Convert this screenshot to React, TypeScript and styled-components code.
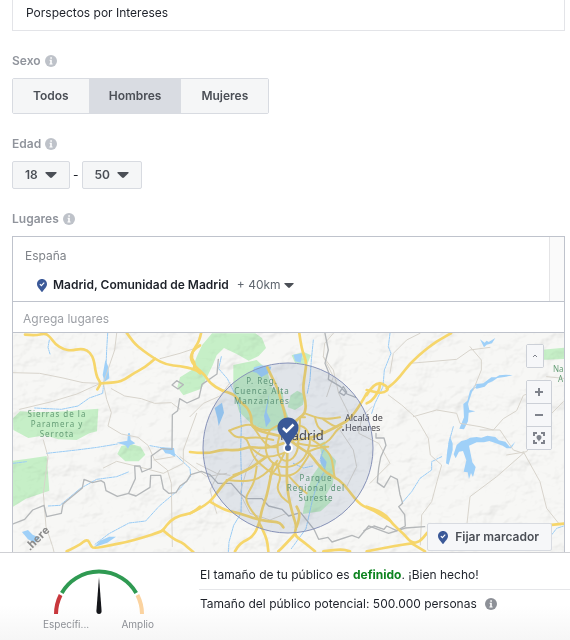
import React from "react";
import styled, { createGlobalStyle } from "styled-components";

const GlobalStyle = createGlobalStyle`
  *, *::before, *::after { box-sizing: border-box; }
  body {
    margin: 0;
    background: #fff;
    color: #1d2129;
    font: 12px/16px Inter, "Liberation Sans", sans-serif;
  }
  button, input, select { font: inherit; color: inherit; }
`;

const Page = styled.div`
  display: flex;
  flex-direction: column;
  height: 100vh;
  min-height: 560px;
`;

const Form = styled.form`
  display: flex;
  flex: 1;
  flex-direction: column;
  min-height: 0;
  padding: 0 5px 0 12px;
`;

const NameInput = styled.input`
  width: 100%;
  height: 31px;
  flex: none;
  padding: 0 13px 6px;
  border: 1px solid #e3e4e8;
  border-top: 0;
  border-radius: 0;
  background: #fff;
  outline: none;
`;

const Field = styled.fieldset<{ $top: number }>`
  display: flex;
  flex: none;
  flex-direction: column;
  align-items: flex-start;
  min-width: 0;
  margin: ${(p) => p.$top}px 0 0;
  padding: 0;
  border: 0;
`;

const FieldLabel = styled.legend`
  display: flex;
  align-items: center;
  gap: 4px;
  height: 16px;
  margin-bottom: 9px;
  padding: 0;
  color: #90949c;
  font-weight: 600;
`;

const Segments = styled.div`
  display: flex;
  height: 36px;
  border: 1px solid #d8dbe1;
  border-radius: 2px;
`;

const Segment = styled.label`
  display: flex;
  align-items: center;
  padding: 0 20px;
  background: #f5f6f7;
  color: #4b4f56;
  font-weight: 600;
  cursor: pointer;
  &:has(input:checked) { background: #d9dce2; }
`;

const SegmentRadio = styled.input`
  width: 0;
  height: 0;
  margin: 0;
  appearance: none;
`;

const AgeRow = styled.div`
  display: flex;
  align-items: center;
  gap: 3px;
`;

const SelectBox = styled.span`
  display: grid;
  grid-template-columns: 1fr auto;
  align-items: center;
`;

const Select = styled.select`
  grid-area: 1 / 1 / 2 / 3;
  appearance: none;
  outline: none;
  cursor: pointer;
`;

const AgeSelect = styled(Select)<{ $width: number }>`
  width: ${(p) => p.$width}px;
  height: 28px;
  padding: 0 12px;
  border: 1px solid #d8dbe1;
  border-radius: 2px;
  background: #f5f6f7;
  color: #4b4f56;
  font-weight: 600;
`;

const RadiusSelect = styled(Select)`
  width: 57px;
  padding: 0;
  border: 0;
  background: transparent;
  color: #606770;
`;

const CaretSlot = styled.span<{ $inset: number }>`
  display: flex;
  grid-area: 1 / 2 / 2 / 3;
  margin-right: ${(p) => p.$inset}px;
  color: #4b4f56;
  pointer-events: none;
`;

const Places = styled.section`
  display: flex;
  flex: 1;
  flex-direction: column;
  min-height: 0;
  border: 1px solid #bfc3cc;
  border-bottom: 0;
`;

const PlaceList = styled.div`
  display: flex;
  flex: none;
  justify-content: space-between;
  height: 64px;
`;

const PlaceBody = styled.div`
  display: flex;
  flex-direction: column;
  padding: 11px 12px 0;
  gap: 13px;
`;

const Country = styled.span`
  color: #7f8389;
`;

const PlaceRow = styled.div`
  display: flex;
  align-items: center;
  padding-left: 12px;
  gap: 6px;
`;

const PlaceName = styled.span`
  margin-right: 2px;
  font-weight: 600;
`;

const ScrollTrack = styled.div`
  width: 15px;
  border-left: 1px solid #e4e4e6;
  background: #fafafa;
`;

const PlaceInput = styled.input`
  flex: none;
  width: 100%;
  height: 32px;
  padding: 3px 10px 0;
  border: 0;
  border-top: 1px solid #bfc3cc;
  border-bottom: 1px solid #bfc3cc;
  background: #fff;
  outline: none;
  &::placeholder { color: #9da0a6; opacity: 1; }
`;

const MapFrame = styled.div`
  position: relative;
  flex: 1;
  min-height: 0;
  overflow: hidden;
  background: #f4f4f2;
  > svg { display: block; width: 100%; height: 100%; }
`;

const MapControls = styled.div`
  position: absolute;
  top: 11px;
  right: 12px;
  display: flex;
  flex-direction: column;
  align-items: flex-start;
  gap: 12px;
`;

const ControlGroup = styled.div`
  display: flex;
  flex-direction: column;
  border: 1px solid #ccd0d7;
  border-radius: 2px;
  background: #ccd0d7;
  gap: 1px;
`;

const ControlButton = styled.button<{ $narrow?: boolean }>`
  display: flex;
  align-items: center;
  justify-content: center;
  width: ${(p) => (p.$narrow ? 16 : 24)}px;
  height: 22px;
  padding: 0;
  border: 0;
  background: #f6f7f9;
  color: #7f838c;
  cursor: pointer;
`;

const MarkerButton = styled.button`
  position: absolute;
  right: 12px;
  bottom: 1px;
  display: flex;
  align-items: center;
  gap: 7px;
  height: 28px;
  padding: 0 12px 0 10px;
  border: 1px solid #d8dbe1;
  border-radius: 2px;
  background: #f6f7f9;
  color: #4b4f56;
  font-weight: 600;
  cursor: pointer;
`;

const Summary = styled.footer`
  display: flex;
  flex: none;
  height: 88px;
  border-top: 1px solid #cfd0d4;
  background: linear-gradient(#fff 60%, #f6f6f6);
`;

const Gauge = styled.div`
  display: flex;
  flex: none;
  flex-direction: column;
  align-items: center;
  width: 199px;
  padding: 14px 2px 0 0;
`;

const GaugeDial = styled.svg`
  width: 92px;
  height: 49px;
`;

const GaugeLabels = styled.div`
  display: flex;
  justify-content: space-between;
  width: 111px;
  color: #8d9096;
  font-size: 10px;
`;

const SummaryText = styled.div`
  flex: 1;
  padding-top: 13px;
`;

const SummaryLine = styled.p<{ $divided?: boolean }>`
  display: flex;
  align-items: center;
  gap: 8px;
  margin: 0;
  padding: ${(p) => (p.$divided ? "6px 0 0 1px" : "1px 0 6px 1px")};
  border-top: ${(p) => (p.$divided ? "1px solid #e5e6e9" : "0")};
  white-space: nowrap;
`;

const Good = styled.strong`
  color: #0e8420;
  font-weight: 700;
`;

function InfoIcon({ color = "#bec2c9" }: { color?: string }) {
  return (
    <svg width="12" height="12" viewBox="0 0 12 12" aria-hidden="true">
      <circle cx="6" cy="6" r="6" fill={color} />
      <path d="M5.3 2.2h1.6v1.5H5.3zM4.6 4.7h2.2v3.8h.8v1H4.4v-1h.8V5.7h-.6z" fill="#fff" />
    </svg>
  );
}

function Caret({ size = 12 }: { size?: number }) {
  return (
    <svg width={size} height={size / 2} viewBox="0 0 12 6" aria-hidden="true">
      <path d="M1 0h10q1 0 .6.9L7 5.5q-1 .8-2 0L.4.9Q0 0 1 0z" fill="currentColor" />
    </svg>
  );
}

function PinIcon() {
  return (
    <svg width="10" height="13" viewBox="0 0 21 27" aria-hidden="true">
      <path d="M10.5 0C4.5 0 0 4.600 0 10.400c0 6.600 6.800 11.400 9 15.800.7 1.200 2.300 1.200 3 0 2.200-4.400 9-9.200 9-15.800C21 4.600 16.500 0 10.500 0z" fill="#3b5998" />
      <path d="M6 10.500l3.200 3.300 6-6.300" fill="none" stroke="#fff" strokeWidth="2.400" />
    </svg>
  );
}

/* Turns a list of points into one path whose corners are rounded through the segment midpoints. */
function smooth(line: string) {
  const pts = line.split(" ").map((p) => p.split(",").map(Number));
  let d = `M${pts[0][0]} ${pts[0][1]}`;
  for (let i = 1; i < pts.length - 1; i++) {
    const [x, y] = pts[i];
    const [nx, ny] = pts[i + 1];
    d += `Q${x} ${y} ${(x + nx) / 2} ${(y + ny) / 2}`;
  }
  const last = pts[pts.length - 1];
  return `${d}L${last[0]} ${last[1]}`;
}

const WEST_MOTORWAYS = [
  "75,14 105,17 135,10 150,20 165,42 190,58 215,62 240,56 262,60 277,78 283,98 286,120 292,145 303,160 292,178",
  "303,160 350,158 375,148 400,130 435,112 465,86",
  "380,8 400,38 430,62 462,85 500,105 540,108 585,118 600,130",
  "582,115 586,100 574,85 578,62 600,46",
  "200,664 235,648 262,626 272,646 280,656 330,646 380,636 430,622 480,606 490,600 510,572 540,556 575,550 600,530",
  "488,600 520,628 545,636 560,650 580,666",
];

const CITY_MOTORWAYS = [
  "328,10 335,60 350,95 345,130 338,180 348,220 345,250 330,262 305,285",
  "35,0 30,30 10,60 0,85 15,110 45,135 60,160 95,182 130,192 150,215 172,232 185,260 183,285 200,300 235,310 270,318",
  "232,112 250,150 265,180 275,220 285,250 290,290",
  "530,190 490,262 440,290 400,310 360,325 310,330",
  "0,366 50,372 95,358 140,362 180,350 215,355 250,350 280,340",
  "300,330 330,355 360,370 380,400 410,430 450,450 475,480 510,525 550,540 600,572",
  "292,365 290,430 292,480 300,520 310,560 320,590 312,615 340,635 375,664",
  "250,400 240,450 230,500 215,540 208,580 190,620 150,640 135,664",
  "230,380 190,410 150,430 110,450 80,490 60,515 30,535 0,550",
  "60,515 100,540 150,550 208,570 250,575 270,578 280,592",
  "312,615 280,650 265,664",
  "208,580 230,620 235,664",
  "320,590 332,555 320,530",
  "400,664 450,656 480,664",
];

const CITY_STREETS = [
  "275,300 310,296 328,330 320,372 298,395 268,388 260,345 275,300",
  "240,300 270,280 305,285 345,288 362,325 355,365 330,400 285,415 245,400 225,365 230,320 240,300",
  "118,302 150,288 185,282 210,300 240,300",
  "118,302 135,325 165,318 180,350 192,385 220,410 245,430 285,440 320,430 345,395 360,370",
  "345,250 375,262 410,268 450,262",
  "360,325 400,350 425,380 430,420 435,445",
  "190,290 215,330 240,352 262,352",
  "165,325 200,320 250,330",
  "200,410 195,450 180,480 165,505 182,540 208,570",
  "110,450 150,455 200,450 240,420 262,392",
  "260,400 275,440 260,470 272,500 300,520",
  "375,262 380,290 405,308",
  "305,285 325,262 345,262",
  "322,340 370,350 395,345 420,330 440,300 455,290",
  "180,350 210,380 250,380 290,366",
  "130,435 160,425 190,408",
  "355,365 385,352 415,350",
  "298,440 325,470 350,490",
  "292,350 270,400 240,440",
  "330,262 330,300 318,330",
  "400,268 425,285 440,290",
];

const EAST_MOTORWAYS = [
  "243,10 215,25 185,45 160,65 120,100 90,140 65,165 50,175",
  "-10,195 15,152 60,172 40,192 -10,180",
  "-10,220 5,215 28,180 30,160",
  "-10,530 40,545 70,585 100,610 125,640 150,635 172,608",
  "125,640 165,664",
  "-10,664 60,650 125,640",
  "530,586 582,581",
];

function Roads({ lines, width }: { lines: string[]; width: number }) {
  return (
    <g fill="none" stroke="#f6d66b" strokeWidth={width}>
      {lines.map((line) => <path key={line} d={smooth(line)} />)}
    </g>
  );
}

function MapDrawing() {
  return (
    <svg viewBox="13 333 551 219" preserveAspectRatio="xMidYMid slice" role="img" aria-label="Mapa de Madrid">
      <defs>
        <filter id="relief" x="0" y="0" width="100%" height="100%">
          <feTurbulence type="fractalNoise" baseFrequency="0.011 0.014" numOctaves="4" seed="8" />
          <feDiffuseLighting surfaceScale="26" diffuseConstant="1.2" lightingColor="#fff">
            <feDistantLight azimuth="225" elevation="58" />
          </feDiffuseLighting>
        </filter>
      </defs>
      <rect x="0" y="320" width="580" height="240" fill="#f7f7f5" />

      <g transform="translate(0 330) scale(.33333)" strokeLinejoin="round" strokeLinecap="round">
        {/* Parks */}
        <g fill="#c6efc7">
          <path d="M39 265L60 244l35 2 45 0 60-2 45-4 50-4-4 68-23 6-38 20-55-2-40-12-50 8-45-24z" />
          <path d="M39 392l45-6 56-8 8 104-40 14-30 10-39 24z" />
          <path d="M352 372l12-24 30-6 28 8 14 24-20 20-40 0z" />
          <path d="M540 142l35-22 15-40 16-34 30-36 130 0 20 14 12 30-22 24-30 14-36-20-38-18-22 22-12 30-34 70-54 20-18-24z" />
          <path d="M700 105l70-15 30 28 16 55 32 12 4 40 16 46-16 28-44 4-50-18-40-38-18-60z" />
          <path d="M875 76l36-10 22 10-12 28-36-6zM872 196l20-14 22 12-5 30-24 16-22-8zM958 342l16-8 6 26 28 32-10 70-24 38 20 14-32 30-54 8 12-62 18-54 30-42z" />
          <path d="M1578 76l40-16 90-8v34l-90 4-38 6z" />
        </g>
        <rect x="39" y="0" width="1660" height="680" filter="url(#relief)" opacity=".12" style={{ mixBlendMode: "multiply" }} />

        {/* Rivers */}
        <g fill="none" stroke="#9accf6" strokeWidth="3" strokeDasharray="9 3 4 3">
          <path d="M323 10l-3 50-2 50-6 42-4 38-40 14-34 24-50 10-80-4M148 30l-4 22 6 20M140 370l90-10 62-8 60-10M450 347l45 8 30 18 45 42 2 24-30 35-65 55-40 44-50 6-60 32-42 32M39 400l40-5M145 528l35-2 60-50 50-28 60-8 35-14" />
          <path d="M664 80l-8 36 26 30 22 44 16 40 4 60-2 70 3 110-2 80-22 36-14 50-2 30M940 30l-6 60-4 60-8 40M970 360l-10 30 16 30-26 46-14 50-18 80-44 60M1170 10l-5 40 8 20-20 50-4 50-24 50-10 30M880 400l30 14 28-6" />
          <path d="M1360 290l-14 50 2 40M1325 380l-30 15 0 25-35 25-25 40-30 35M1700 585l-30 10-20 26" />
        </g>
        {/* Lakes */}
        <g fill="#9fd0f8">
          <path d="M316 90l9 20 3 35-14 10-6-20zM350 338l32-6 2-22 6 0 2 20 14 10-16 6-6 10-8-10zM484 352l38 2 4 28-16-10-14-2zM66 606l18-6 14 14 22 10-16 14-20-10zM300 632l28-12 20 0-26 18-40 14z" />
          <path d="M762 112l22-6 30 4-6 18-24 14-14-14-12-2zM808 190l-8 56 12 26-14 20-6-34zM666 218l6 30-16 40-4-24-8-30zM880 74l28-4-6 28-16-4zM962 372l18 24-4 20-14-18z" />
          <path d="M1422 170l-12 12-8 30-12 10 2 40-14 34 14 2 12-24 2-26 20-4-18-4-4-18 12-36 14-20zM1420 170l10-8 20-2 10-8 14-10 14 0 10-6 20-2 20 2-20 4-26 4-14 10-14 6-10 10-24 6zM1370 345l14-12 16-4 10-6 20-2 14 2 18-6 24 4 10 10 20 4 14 16 16-16-12 20-14 0-12-8-16-6-24-8-16 4-22 0-23 10 4 20 6 30 10 14-8 30-6-12-6 18-4-20-12-2 8-34-10-28-12 2-10 20-6-12zM1350 320l-8 40-4 40 8 4 12-44 0-20zM1440 28l14 10 6-6 6 4 20-12-10 16-16 4-8 8z" />
        </g>

        {/* Minor roads */}
        <g fill="none" stroke="#d8d4cc" strokeWidth="3">
          <path d="M39 128l80 2 70 14 60 14 52 2-70 32-80 24-92 22M350 10l-6 50-34 100 10 48 14 40-10 40 40 24 50 10 30 24 20 44 38 30 12 40 3 190M334 176l40 22 50 8 40 14 50-2 26 20M600 50l-60 20-60 16M130 330l14 50-14 110 8 100 20 60 10 40M590 250l-40 110 0 40-60 30-60-16-80-20-40 20M462 390l60-10M540 380l80 60 60-10" />
          <path d="M570 260l40-40 50-22 30-40M590 400l60 30 40 6M1000 10l-26 30-4 40 30 40 16 70 30 60M1110 460l60-60-34-60-60-30 10-50 30-30M780 360l-40 60-20 70 30 60 60 20 50-20M660 420l-30 60 20 70M1020 300l40 60 10 50-30 60M970 80l30 60-20 60" />
          <path d="M1170 130l10-60 40-40 40-20M1165 195l40 30 45 40 35 60 6 50 34 30-14 50-16 60-30 40-4 90M1240 260l70-20 60 10 10 30 60 10 40 10 30-34 40-24 20-46 60-20M1230 100l140-12 40-28 60-8M1410 50l34 40 0 30-24 60M1570 365l50 90 20 80 40 50M1570 370l-80 70-80 60-10 90M1520 375l60-10 50-90 60-60M1640 140l60 6M1440 300l60 0 40 60 30 10" />
        </g>
        {/* Provincial borders */}
        <g fill="none" stroke="#b4b7b9" strokeWidth="4">
          <path d="M39 582l35-14 24-28 34-14 8 34 44-10 5-28 58-48 5-26 25 10 26-6 10 6 5 24 34 17 34-9 20-44-2-38 16 0 6 18 28-12 0-36 30-22 32 2 1-104 16-12 6-36 22 13 36-16 9-40 45-31 4-44M384 490l24 8 42-26 2-36 30 0 8 40 16 14 22-2 12-20 20-14 12-20 32-10 26 10 24 26 40 0 26 30 20 16 46 0 20 22 40 10 20 20 36-10 40 50 14 30 28-6 12 14 60-20 20 8 30-36 60 22 50-16 58-4M975 10l10 50-10 40 12 30-2 18 36 22 20 22 26 10M516 165l14-13 20 12-16 13zM1030 170l10 16-8 10-14-8z" />
          <path d="M1128 310l0 14 24 0 6 22-16 36-6 32-4 44 20 14 20-34 20 10 8 46 8 26-12 10 18 24 2 34-26 14-30-14-8 10-30-10-30 14" />
        </g>

        <Roads lines={WEST_MOTORWAYS} width={8} />
        <g transform="translate(570 0)">
          <Roads lines={CITY_MOTORWAYS} width={8} />
          <Roads lines={CITY_STREETS} width={6} />
        </g>
        <g transform="translate(1110 0)">
          <Roads lines={EAST_MOTORWAYS} width={8} />
        </g>
      </g>

      <g fontFamily="'Noto Sans', sans-serif" fontSize="8" fill="#659d76" textAnchor="middle" letterSpacing="1">
        <text x="57" y="417">Sierras de la</text>
        <text x="57" y="427">Paramera y</text>
        <text x="57" y="437">Serrota</text>
        <text x="262" y="384">P. Reg.</text>
        <text x="262" y="394">Cuenca Alta</text>
        <text x="262" y="404">Manzanares</text>
        <text x="316" y="481">Parque</text>
        <text x="316" y="491">Regional del</text>
        <text x="316" y="501">Sureste</text>
      </g>
      <g fontFamily="'Noto Sans', sans-serif" fontSize="8" fill="#659d76">
        <text x="553" y="372">Na</text>
        <text x="558" y="382">A</text>
      </g>
      <g fontFamily="'Noto Sans', sans-serif" fill="#4d4b50">
        <text x="345" y="421" fontSize="9">Alcalá de</text>
        <text x="345" y="431" fontSize="9">Henares</text>
        <text x="280" y="440" fontSize="13">Madrid</text>
        <circle cx="343" cy="430" r="1" />
      </g>
      <text x="30" y="551" transform="rotate(-45 30 551)" fontFamily="'Open Sans', sans-serif" fontSize="11" fontWeight="700" fill="#8b8b8b">.here</text>

      <circle cx="288" cy="448" r="85" fill="#3b5998" fillOpacity=".12" stroke="#8792b8" strokeWidth="1" />
      <circle cx="288" cy="448" r="4" fill="#3b5998" stroke="#fff" strokeWidth="2" />
      <g transform="translate(277.500 417.500)">
        <path d="M10.500 0C4.600 0 0 4.500 0 10.200c0 4.200 2.400 7 5.100 10.200 2 2.500 3.400 4.600 4.200 7 .4 1.100 2 1.100 2.400 0 .8-2.400 2.200-4.500 4.200-7C18.600 17.200 21 14.400 21 10.200 21 4.500 16.400 0 10.500 0z" fill="#3b5998" />
        <path d="M5.500 10.500l3.500 3.500 7-7" fill="none" stroke="#fff" strokeWidth="2.500" />
      </g>
    </svg>
  );
}

function LabelWithInfo({ children }: { children: React.ReactNode }) {
  return (
    <FieldLabel>
      {children}
      <InfoIcon />
    </FieldLabel>
  );
}

export default function App() {
  const ages = Array.from({ length: 48 }, (_, i) => i + 18);
  return (
    <Page>
      <GlobalStyle />
      <Form onSubmit={(e) => e.preventDefault()}>
        <NameInput aria-label="Nombre del público" defaultValue="Porspectos por Intereses" />

        <Field $top={22}>
          <LabelWithInfo>Sexo</LabelWithInfo>
          <Segments>
            {["Todos", "Hombres", "Mujeres"].map((name) => (
              <Segment key={name}>
                <SegmentRadio type="radio" name="sexo" value={name} defaultChecked={name === "Hombres"} />
                {name}
              </Segment>
            ))}
          </Segments>
        </Field>

        <Field $top={22}>
          <LabelWithInfo>Edad</LabelWithInfo>
          <AgeRow>
            <SelectBox>
              <AgeSelect $width={58} aria-label="Edad mínima" defaultValue="18">
                {ages.map((n) => <option key={n}>{n}</option>)}
              </AgeSelect>
              <CaretSlot $inset={13}><Caret /></CaretSlot>
            </SelectBox>
            -
            <SelectBox>
              <AgeSelect $width={60} aria-label="Edad máxima" defaultValue="50">
                {ages.map((n) => <option key={n}>{n}</option>)}
              </AgeSelect>
              <CaretSlot $inset={13}><Caret /></CaretSlot>
            </SelectBox>
          </AgeRow>
        </Field>

        <Field $top={22}>
          <LabelWithInfo>Lugares</LabelWithInfo>
        </Field>
        <Places aria-label="Lugares">
          <PlaceList>
            <PlaceBody>
              <Country>España</Country>
              <PlaceRow>
                <PinIcon />
                <PlaceName>Madrid, Comunidad de Madrid</PlaceName>
                <SelectBox>
                  <RadiusSelect aria-label="Radio" defaultValue="40">
                    <option value="20">+ 20km</option>
                    <option value="40">+ 40km</option>
                    <option value="80">+ 80km</option>
                  </RadiusSelect>
                  <CaretSlot $inset={0}><Caret size={10} /></CaretSlot>
                </SelectBox>
              </PlaceRow>
            </PlaceBody>
            <ScrollTrack />
          </PlaceList>
          <PlaceInput aria-label="Agrega lugares" placeholder="Agrega lugares" />
          <MapFrame>
            <MapDrawing />
            <MapControls>
              <ControlGroup>
                <ControlButton type="button" $narrow aria-label="Contraer mapa">
                  <svg width="6" height="4" viewBox="0 0 6 4"><path d="M1 3l2-2 2 2" fill="none" stroke="currentColor" /></svg>
                </ControlButton>
              </ControlGroup>
              <ControlGroup>
                <ControlButton type="button" aria-label="Acercar">
                  <svg width="8" height="8" viewBox="0 0 8 8"><path d="M0 4h8M4 0v8" stroke="currentColor" strokeWidth="2" /></svg>
                </ControlButton>
                <ControlButton type="button" aria-label="Alejar">
                  <svg width="8" height="8" viewBox="0 0 8 8"><path d="M0 4h8" stroke="currentColor" strokeWidth="2" /></svg>
                </ControlButton>
                <ControlButton type="button" aria-label="Centrar marcador">
                  <svg width="12" height="12" viewBox="0 0 12 12">
                    <path d="M1 4V1h3M8 1h3v3M11 8v3H8M4 11H1V8" fill="none" stroke="currentColor" strokeWidth="2" />
                    <path d="M6 3a2.500 2.500 0 0 0-2.500 2.600C3.500 7.200 5.200 7.800 6 9.500c.8-1.700 2.500-2.300 2.500-3.900A2.500 2.500 0 0 0 6 3z" fill="currentColor" />
                  </svg>
                </ControlButton>
              </ControlGroup>
            </MapControls>
            <MarkerButton type="button">
              <PinIcon />
              Fijar marcador
            </MarkerButton>
          </MapFrame>
        </Places>
      </Form>

      <Summary>
        <Gauge>
          <GaugeDial viewBox="0 0 92 49" role="img" aria-label="Tamaño del público: definido">
            <g fill="none" strokeWidth="4">
              <path d="M3 47A43 43 0 0 1 7.600 28" stroke="#c8373c" />
              <path d="M8.800 26A43 43 0 0 1 83.200 26" stroke="#2f9a52" />
              <path d="M84.400 28A43 43 0 0 1 89 47" stroke="#fbd3a0" />
            </g>
            <path d="M46 10l2.600 34q0 3-2.600 3T43.400 44z" fill="#15161a" />
          </GaugeDial>
          <GaugeLabels>
            <span>Específi...</span>
            <span>Amplio</span>
          </GaugeLabels>
        </Gauge>
        <SummaryText>
          <SummaryLine>
            <span>El tamaño de tu público es <Good>definido</Good>. ¡Bien hecho!</span>
          </SummaryLine>
          <SummaryLine $divided>
            Tamaño del público potencial: 500.000 personas
            <InfoIcon color="#8d9097" />
          </SummaryLine>
        </SummaryText>
      </Summary>
    </Page>
  );
}
